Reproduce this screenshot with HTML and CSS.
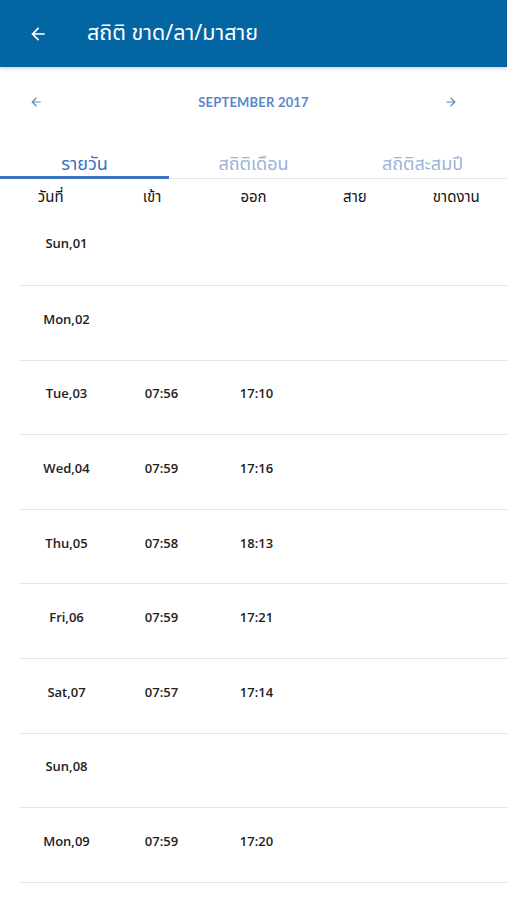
FILE: index.html
```html
<!DOCTYPE html>
<html lang="th">
<head>
  <meta charset="UTF-8">
  <title>สถิติ ขาด/ลา/มาสาย</title>
  <link rel="stylesheet" href="styles.css">
</head>
<body>

  <div class="topbar">
    <svg class="back" width="20" height="20" viewBox="0 0 24 24">
      <path d="M20 11H7.83l5.59-5.59L12 4l-8 8 8 8 1.41-1.41L7.83 13H20v-2z" fill="#fff"/>
    </svg>
    <h1>สถิติ ขาด/ลา/มาสาย</h1>
  </div>

  <div class="month">
    <svg class="arrow prev" width="14" height="14" viewBox="0 0 24 24">
      <path d="M20 11H7.83l5.59-5.59L12 4l-8 8 8 8 1.41-1.41L7.83 13H20v-2z" fill="#5b88c8"/>
    </svg>
    <span class="month-name">SEPTEMBER 2017</span>
    <svg class="arrow next" width="14" height="14" viewBox="0 0 24 24">
      <path d="M4 11h12.17l-5.59-5.59L12 4l8 8-8 8-1.41-1.41L16.17 13H4v-2z" fill="#5b88c8"/>
    </svg>
  </div>

  <div class="tabs">
    <div class="tab active">รายวัน</div>
    <div class="tab">สถิติเดือน</div>
    <div class="tab">สถิติสะสมปี</div>
  </div>

  <div class="head">
    <span>วันที่</span>
    <span>เข้า</span>
    <span>ออก</span>
    <span>สาย</span>
    <span>ขาดงาน</span>
  </div>

  <div class="list">
    <div class="row"><span>Sun,01</span><span></span><span></span><span></span><span></span></div>
    <div class="row"><span>Mon,02</span><span></span><span></span><span></span><span></span></div>
    <div class="row"><span>Tue,03</span><span>07:56</span><span>17:10</span><span></span><span></span></div>
    <div class="row"><span>Wed,04</span><span>07:59</span><span>17:16</span><span></span><span></span></div>
    <div class="row"><span>Thu,05</span><span>07:58</span><span>18:13</span><span></span><span></span></div>
    <div class="row"><span>Fri,06</span><span>07:59</span><span>17:21</span><span></span><span></span></div>
    <div class="row"><span>Sat,07</span><span>07:57</span><span>17:14</span><span></span><span></span></div>
    <div class="row"><span>Sun,08</span><span></span><span></span><span></span><span></span></div>
    <div class="row"><span>Mon,09</span><span>07:59</span><span>17:20</span><span></span><span></span></div>
  </div>

</body>
</html>
```

FILE: styles.css
```css
body {
  margin: 0;
  padding: 0;
  background: #fff;
  font-family: "Noto Sans Thai", "Noto Sans", "DejaVu Sans", sans-serif;
  color: #222;
}

.topbar {
  height: 67px;
  background: #0465a3;
  display: flex;
  align-items: center;
  padding-left: 28px;
  box-shadow: 0 2px 3px rgba(0, 0, 0, 0.15);
}

.back {
  width: 20px;
  height: 20px;
}

.topbar h1 {
  margin: 0 0 0 39px;
  font-size: 21.5px;
  font-weight: 400;
  color: #fff;
}

.month {
  display: grid;
  grid-template-columns: 1fr auto 1fr;
  align-items: center;
  height: 68px;
  margin-top: 1px;
}

.arrow.prev {
  margin-left: 29px;
}

.arrow.next {
  justify-self: end;
  margin-right: 49px;
}

.month-name {
  font-family: "Lato", sans-serif;
  font-size: 13px;
  font-weight: 700;
  color: #5b88c8;
  letter-spacing: 0.2px;
}

.tabs {
  display: flex;
  margin-top: 18px;
  border-bottom: 1px solid #e6e6e6;
}

.tab {
  flex: 1;
  text-align: center;
  font-size: 18px;
  line-height: 22px;
  color: #9bb3db;
  border-bottom: 3px solid transparent;
  margin-bottom: -1px;
}

.tab.active {
  color: #3b72bf;
  border-bottom-color: #3b72bf;
}

.head {
  display: grid;
  grid-template-columns: repeat(5, 1fr);
  text-align: center;
  font-size: 15px;
  color: #111;
  padding-top: 7px;
}

.list {
  margin-left: 19px;
}

.row {
  display: grid;
  grid-template-columns: repeat(5, 95px);
  align-items: center;
  box-sizing: border-box;
  height: 74.6px;
  padding-bottom: 8px;
  border-bottom: 1px solid #e4e4e4;
  text-align: center;
  font-family: "Open Sans", sans-serif;
  font-size: 13px;
  font-weight: 600;
  color: #222;
}

.row:first-child {
  height: 77px;
}
```
